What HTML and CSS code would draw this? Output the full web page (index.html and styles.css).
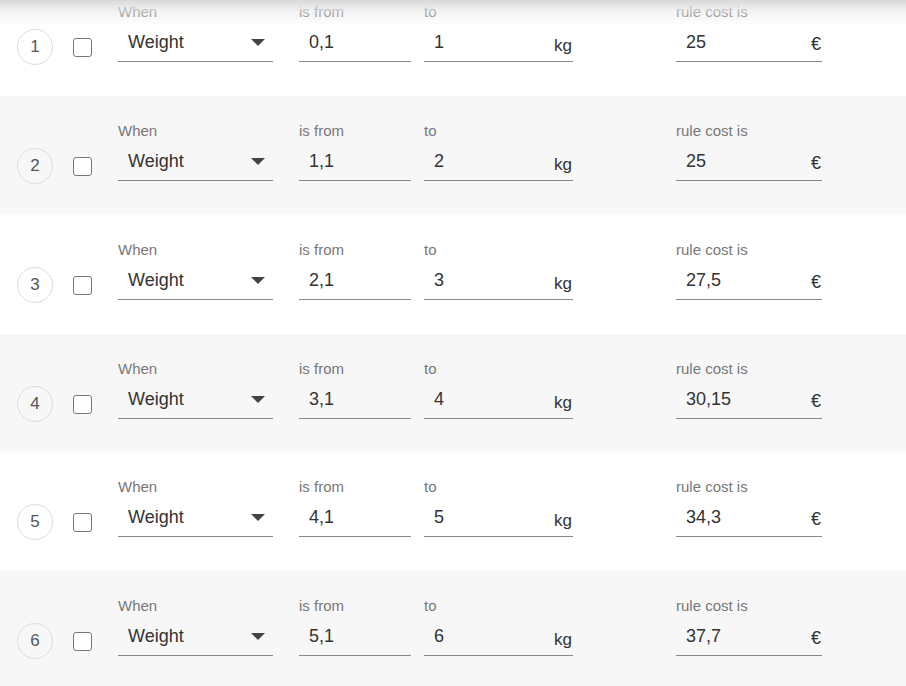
FILE: index.html
```html
<!DOCTYPE html>
<html>
<head>
<meta charset="utf-8">
<link rel="stylesheet" href="styles.css">
</head>
<body>
<div class="top-shadow"></div>
<div class="rules">
  <div class="rule">
    <div class="num">1</div>
    <div class="check"></div>
    <div class="field f-when"><div class="label">When</div><div class="input"><span class="val">Weight</span><span class="caret"></span></div></div>
    <div class="field f-from"><div class="label">is from</div><div class="input"><span class="val">0,1</span></div></div>
    <div class="field f-to"><div class="label">to</div><div class="input"><span class="val">1</span><span class="unit">kg</span></div></div>
    <div class="field f-cost"><div class="label">rule cost is</div><div class="input"><span class="val">25</span><span class="unit euro">€</span></div></div>
  </div>
  <div class="rule alt">
    <div class="num">2</div>
    <div class="check"></div>
    <div class="field f-when"><div class="label">When</div><div class="input"><span class="val">Weight</span><span class="caret"></span></div></div>
    <div class="field f-from"><div class="label">is from</div><div class="input"><span class="val">1,1</span></div></div>
    <div class="field f-to"><div class="label">to</div><div class="input"><span class="val">2</span><span class="unit">kg</span></div></div>
    <div class="field f-cost"><div class="label">rule cost is</div><div class="input"><span class="val">25</span><span class="unit euro">€</span></div></div>
  </div>
  <div class="rule">
    <div class="num">3</div>
    <div class="check"></div>
    <div class="field f-when"><div class="label">When</div><div class="input"><span class="val">Weight</span><span class="caret"></span></div></div>
    <div class="field f-from"><div class="label">is from</div><div class="input"><span class="val">2,1</span></div></div>
    <div class="field f-to"><div class="label">to</div><div class="input"><span class="val">3</span><span class="unit">kg</span></div></div>
    <div class="field f-cost"><div class="label">rule cost is</div><div class="input"><span class="val">27,5</span><span class="unit euro">€</span></div></div>
  </div>
  <div class="rule alt">
    <div class="num">4</div>
    <div class="check"></div>
    <div class="field f-when"><div class="label">When</div><div class="input"><span class="val">Weight</span><span class="caret"></span></div></div>
    <div class="field f-from"><div class="label">is from</div><div class="input"><span class="val">3,1</span></div></div>
    <div class="field f-to"><div class="label">to</div><div class="input"><span class="val">4</span><span class="unit">kg</span></div></div>
    <div class="field f-cost"><div class="label">rule cost is</div><div class="input"><span class="val">30,15</span><span class="unit euro">€</span></div></div>
  </div>
  <div class="rule">
    <div class="num">5</div>
    <div class="check"></div>
    <div class="field f-when"><div class="label">When</div><div class="input"><span class="val">Weight</span><span class="caret"></span></div></div>
    <div class="field f-from"><div class="label">is from</div><div class="input"><span class="val">4,1</span></div></div>
    <div class="field f-to"><div class="label">to</div><div class="input"><span class="val">5</span><span class="unit">kg</span></div></div>
    <div class="field f-cost"><div class="label">rule cost is</div><div class="input"><span class="val">34,3</span><span class="unit euro">€</span></div></div>
  </div>
  <div class="rule alt">
    <div class="num">6</div>
    <div class="check"></div>
    <div class="field f-when"><div class="label">When</div><div class="input"><span class="val">Weight</span><span class="caret"></span></div></div>
    <div class="field f-from"><div class="label">is from</div><div class="input"><span class="val">5,1</span></div></div>
    <div class="field f-to"><div class="label">to</div><div class="input"><span class="val">6</span><span class="unit">kg</span></div></div>
    <div class="field f-cost"><div class="label">rule cost is</div><div class="input"><span class="val">37,7</span><span class="unit euro">€</span></div></div>
  </div>
</div>
</body>
</html>
```

FILE: styles.css
```css
html, body {
  margin: 0;
  padding: 0;
  background: #fff;
  font-family: "Liberation Sans", Arial, sans-serif;
  overflow: hidden;
}

.top-shadow {
  position: fixed;
  top: 0;
  left: 0;
  right: 0;
  height: 26px;
  background: linear-gradient(to bottom, #d8d8d8 0%, rgba(232,232,232,0.6) 40%, rgba(255,255,255,0) 100%);
  z-index: 5;
  pointer-events: none;
}

.rules {
  margin-top: -22.75px;
  display: flex;
  flex-direction: column;
}

.rule {
  height: 118.75px;
  box-sizing: border-box;
  display: flex;
  align-items: flex-start;
  padding: 26px 0 0 17px;
  background: #fff;
}

.rule.alt {
  background: #f7f7f7;
  border-bottom: 3px solid #fafafa;
}

.num {
  width: 36px;
  height: 36px;
  box-sizing: border-box;
  border: 1px solid #dcdcdc;
  border-radius: 50%;
  margin-top: 26px;
  display: flex;
  align-items: center;
  justify-content: center;
  font-size: 17px;
  color: #555;
  flex: none;
}

.check {
  width: 19px;
  height: 19px;
  box-sizing: border-box;
  border: 1px solid #777;
  border-radius: 3px;
  background: #fff;
  margin: 35px 0 0 20px;
  flex: none;
}

.field {
  display: flex;
  flex-direction: column;
  flex: none;
}

.f-when { width: 155px; margin-left: 26px; }
.f-from { width: 112px; margin-left: 26px; }
.f-to { width: 149px; margin-left: 13px; }
.f-cost { width: 146px; margin-left: 103px; }

.label {
  font-size: 15px;
  line-height: 17px;
  color: #777;
}

.input {
  position: relative;
  display: flex;
  align-items: baseline;
  padding: 12px 0 8px 10px;
  line-height: 21px;
  border-bottom: 1px solid #888;
}

.val {
  font-size: 18px;
  color: #333;
  flex: 1;
}

.unit {
  font-size: 17px;
  color: #333;
  position: relative;
  top: 3px;
  margin-right: 1px;
}

.unit.euro {
  font-size: 18px;
  top: 2px;
}

.caret {
  position: absolute;
  right: 8px;
  top: 19px;
  width: 0;
  height: 0;
  border-left: 7px solid transparent;
  border-right: 7px solid transparent;
  border-top: 7px solid #444;
}
```
